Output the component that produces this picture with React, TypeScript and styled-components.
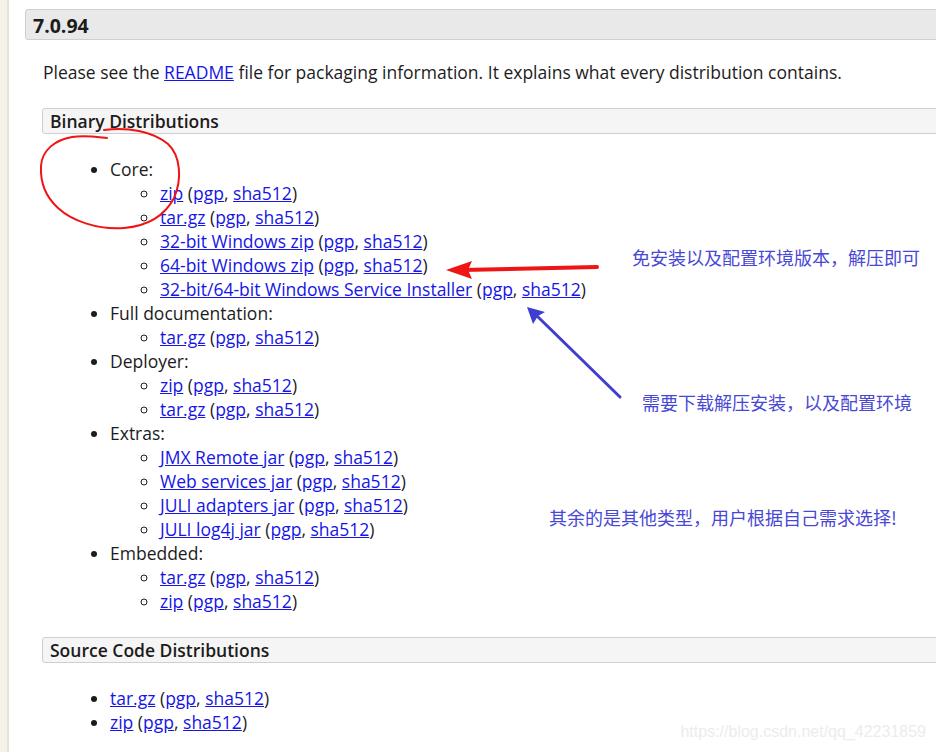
import styled, { createGlobalStyle } from "styled-components";

const GlobalStyle = createGlobalStyle`
  html, body {
    margin: 0;
    padding: 0;
    background: #f7f2e8;
  }
  body {
    font-family: "Open Sans", "Noto Sans", sans-serif;
    color: #1c1c1c;
  }
`;

type Link2 = { label: string };

interface Group {
  title: string;
  items: string[];
}

const binary: Group[] = [
  {
    title: "Core:",
    items: [
      "zip",
      "tar.gz",
      "32-bit Windows zip",
      "64-bit Windows zip",
      "32-bit/64-bit Windows Service Installer",
    ],
  },
  { title: "Full documentation:", items: ["tar.gz"] },
  { title: "Deployer:", items: ["zip", "tar.gz"] },
  {
    title: "Extras:",
    items: [
      "JMX Remote jar",
      "Web services jar",
      "JULI adapters jar",
      "JULI log4j jar",
    ],
  },
  { title: "Embedded:", items: ["tar.gz", "zip"] },
];

const Download = ({ label }: Link2) => (
  <>
    <A href="#">{label}</A> (<A href="#">pgp</A>, <A href="#">sha512</A>)
  </>
);

export default function App() {
  return (
    <>
      <GlobalStyle />
      <Page>
        <Main>
          <VersionHeader>7.0.94</VersionHeader>
          <Intro>
            Please see the <A href="#">README</A> file for packaging
            information. It explains what every distribution contains.
          </Intro>
          <SectionHeader>Binary Distributions</SectionHeader>
          <Outer>
            {binary.map((g) => (
              <li key={g.title}>
                {g.title}
                <Inner>
                  {g.items.map((it) => (
                    <li key={it}>
                      <Download label={it} />
                    </li>
                  ))}
                </Inner>
              </li>
            ))}
          </Outer>
          <SectionHeader>Source Code Distributions</SectionHeader>
          <Outer>
            <li>
              <Download label="tar.gz" />
            </li>
            <li>
              <Download label="zip" />
            </li>
          </Outer>
        </Main>

        <Marks width="936" height="752" viewBox="0 0 936 752">
          <path
            d="M104 130 C128 127 152 131 168 144 C181 156 182 180 174 198 C165 215 148 226 124 228 C98 230 72 221 58 208 C46 197 40 184 41 166 C42 150 55 140 72 137 C85 135 97 137 107 138"
            fill="none"
            stroke="#f01414"
            strokeWidth="2"
            strokeLinecap="round"
          />
          <line x1="597" y1="267" x2="462" y2="270" stroke="#f01414" strokeWidth="4" strokeLinecap="round" />
          <polygon points="446,270 472,261 468,270 472,279" fill="#f01414" />
          <line x1="620" y1="397" x2="536" y2="315" stroke="#3e3ecf" strokeWidth="3" strokeLinecap="round" />
          <polygon points="527,307 545,312 538,316 533,324" fill="#3e3ecf" />
        </Marks>
        <Note $x={632} $y={245}>免安装以及配置环境版本，解压即可</Note>
        <Note $x={642} $y={390}>需要下载解压安装，以及配置环境</Note>
        <Note $x={549} $y={505}>其余的是其他类型，用户根据自己需求选择!</Note>
        <Watermark>https://blog.csdn.net/qq_42231859</Watermark>
      </Page>
    </>
  );
}

const Page = styled.div`
  position: relative;
  width: 936px;
  height: 752px;
  overflow: hidden;
  display: flex;
`;

const Main = styled.main`
  flex: 1;
  margin-left: 7px;
  background: #fff;
  border-left: 2px solid #e4e2de;
  padding: 9px 0 0 16px;
  font-size: 17.5px;
`;

const VersionHeader = styled.h3`
  margin: 0 -20px 0 0;
  height: 29px;
  padding: 0 0 0 7px;
  background: #e9e9e9;
  border: 1px solid #cfcfcf;
  border-radius: 3px;
  font-size: 19.5px;
  font-weight: 700;
  line-height: 31px;
`;

const Intro = styled.p`
  margin: 20px 0 0 18px;
  line-height: 24px;
`;

const SectionHeader = styled.h4`
  margin: 24px -20px 0 17px;
  height: 24px;
  padding: 0 0 0 7px;
  background: #f5f5f5;
  border: 1px solid #cfcfcf;
  border-radius: 3px;
  font-size: 17.5px;
  font-weight: 600;
  line-height: 25px;
`;

const Outer = styled.ul`
  margin: 23px 0 0 0;
  padding: 0 0 0 85px;
  line-height: 24px;
  list-style: disc;
`;

const Inner = styled.ul`
  margin: 0;
  padding: 0 0 0 50px;
  list-style: circle;
`;

const A = styled.a`
  color: #1515e6;
  text-decoration: underline;
`;

const Marks = styled.svg`
  position: absolute;
  left: 0;
  top: 0;
  pointer-events: none;
`;

const Note = styled.div<{ $x: number; $y: number }>`
  position: absolute;
  left: ${(p) => p.$x}px;
  top: ${(p) => p.$y}px;
  font-family: "Noto Sans CJK SC", sans-serif;
  font-size: 18px;
  line-height: 24px;
  color: #4848d4;
  white-space: nowrap;
`;

const Watermark = styled.div`
  position: absolute;
  right: 10px;
  top: 723px;
  font-family: "Liberation Sans", Arial, sans-serif;
  font-size: 16px;
  color: #ececec;
`;
